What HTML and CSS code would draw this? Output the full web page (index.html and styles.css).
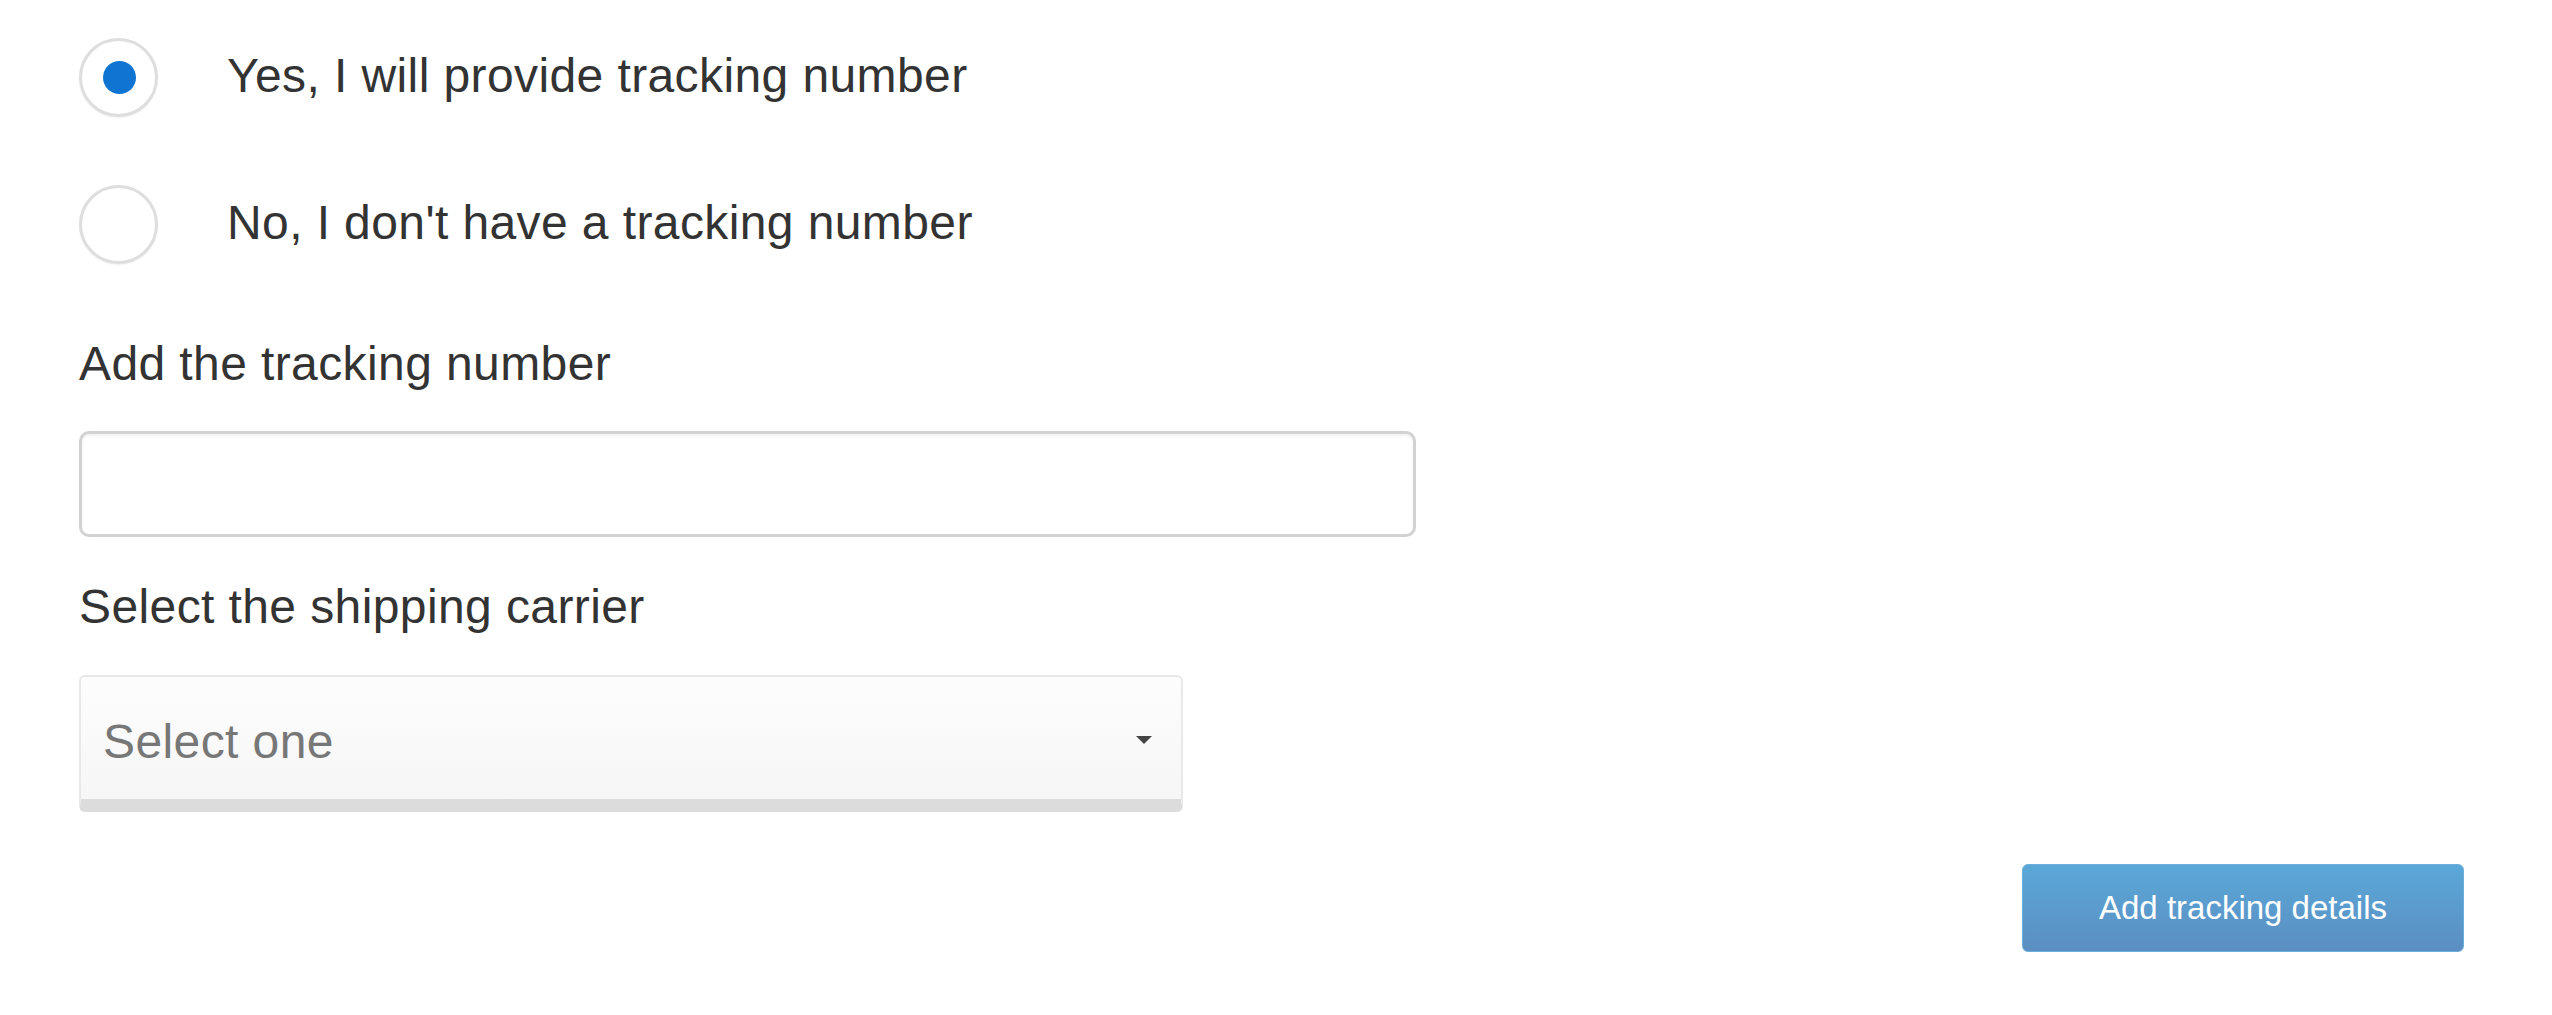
FILE: index.html
```html
<!DOCTYPE html>
<html lang="en">
<head>
<meta charset="utf-8">
<title>Tracking details</title>
<link rel="stylesheet" href="styles.css">
</head>
<body>
<form class="tracking-form">
  <div class="radio-group">
    <label class="radio-row">
      <span class="radio checked"><span class="radio-dot"></span></span>
      <span class="radio-text">Yes, I will provide tracking number</span>
    </label>
    <label class="radio-row">
      <span class="radio"></span>
      <span class="radio-text">No, I don't have a tracking number</span>
    </label>
  </div>

  <div class="field">
    <div class="field-label">Add the tracking number</div>
    <div class="text-input"></div>
  </div>

  <div class="field field-select">
    <div class="field-label">Select the shipping carrier</div>
    <div class="select-box">
      <span class="select-placeholder">Select one</span>
      <span class="select-caret"></span>
    </div>
  </div>

  <div class="actions">
    <div class="btn-primary">Add tracking details</div>
  </div>
</form>
</body>
</html>
```

FILE: styles.css
```css
html, body {
  margin: 0;
  padding: 0;
  background: #ffffff;
}

body {
  font-family: "Liberation Sans", Arial, sans-serif;
  color: #333333;
}

.tracking-form {
  display: flex;
  flex-direction: column;
  padding: 38px 88px 0 79px;
}

.radio-group {
  display: flex;
  flex-direction: column;
  gap: 68px;
}

.radio-row {
  display: flex;
  align-items: center;
  gap: 69px;
  height: 79px;
}

.radio {
  box-sizing: border-box;
  width: 79px;
  height: 79px;
  border-radius: 50%;
  border: 3px solid #dedede;
  background: #ffffff;
  box-shadow: 0 1px 2px rgba(0, 0, 0, 0.06);
  display: flex;
  align-items: center;
  justify-content: center;
  flex: none;
}

.radio-dot {
  width: 33px;
  height: 33px;
  border-radius: 50%;
  background: #1074d2;
  margin-left: 2px;
}

.radio-text {
  font-size: 48px;
  line-height: 56px;
  letter-spacing: 0.4px;
  color: #333333;
  margin-top: -4px;
}

.field {
  display: flex;
  flex-direction: column;
  margin-top: 72px;
}

.field-label {
  font-size: 48px;
  line-height: 56px;
  letter-spacing: 0.4px;
  color: #333333;
}

.text-input {
  box-sizing: border-box;
  margin-top: 39px;
  width: 1337px;
  height: 106px;
  border: 3px solid #d2d2d2;
  border-radius: 10px;
  background: #ffffff;
  box-shadow: inset 0 2px 3px rgba(0, 0, 0, 0.06);
}

.field-select {
  margin-top: 42px;
}

.select-box {
  box-sizing: border-box;
  margin-top: 40px;
  width: 1104px;
  height: 137px;
  display: flex;
  align-items: center;
  justify-content: space-between;
  padding: 0 29px 0 22px;
  border: 2px solid #e8e8e8;
  border-bottom: 13px solid #dcdcdc;
  border-radius: 6px;
  background: linear-gradient(#fdfdfd, #f6f6f6);
}

.select-placeholder {
  font-size: 48px;
  line-height: 56px;
  letter-spacing: 0.4px;
  color: #777777;
  margin-top: 8px;
}

.select-caret {
  width: 0;
  height: 0;
  border-left: 8px solid transparent;
  border-right: 8px solid transparent;
  border-top: 8px solid #444444;
  margin-top: 4px;
}

.actions {
  display: flex;
  justify-content: flex-end;
  margin-top: 52px;
}

.btn-primary {
  box-sizing: border-box;
  width: 442px;
  height: 88px;
  display: flex;
  align-items: center;
  justify-content: center;
  font-size: 33px;
  color: #ffffff;
  border: 1px solid #6aaedb;
  border-radius: 6px;
  background: linear-gradient(#5aa8d8, #5b8ec2);
}
```
